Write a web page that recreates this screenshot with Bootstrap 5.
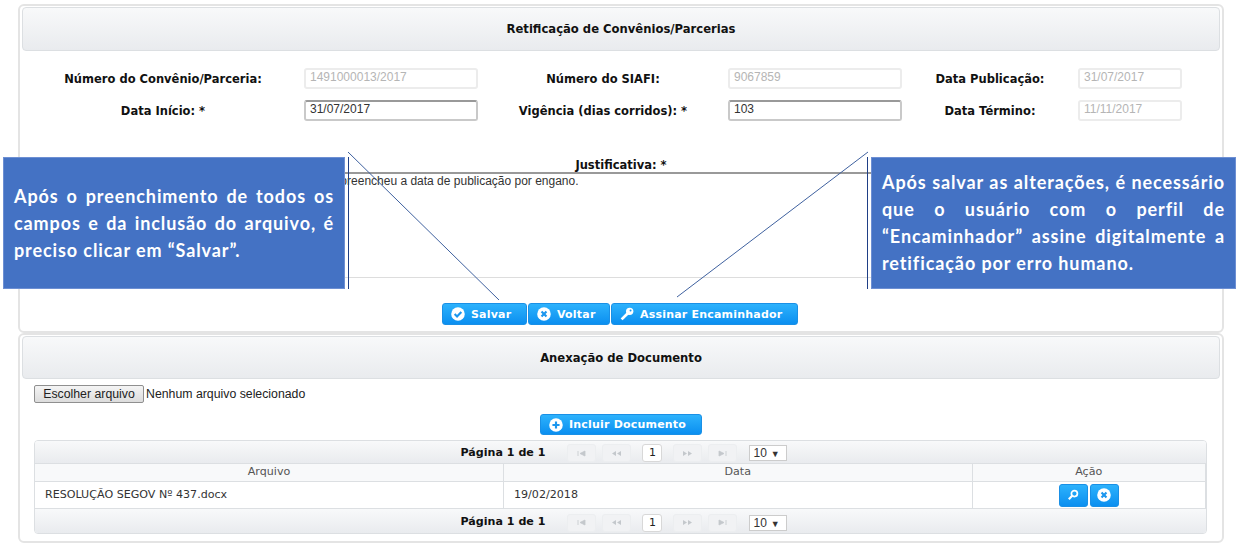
<!DOCTYPE html>
<html lang="pt-BR">
<head>
<meta charset="UTF-8">
<title>Retificação de Convênios/Parcerias</title>
<link href="https://cdn.jsdelivr.net/npm/bootstrap@5.3.0/dist/css/bootstrap.min.css" rel="stylesheet">
<style>
html, body { height: 543px; overflow: hidden; background: #fff; }
body { position: relative; font-family: "DejaVu Sans", sans-serif; font-size: 11px; color: #222; padding: 4px 15px 0 18px; }
.painel { border: 2px solid #e4e4e4; border-radius: 6px; padding: 1px 2px; background: #fff; }
.painel-a { height: 329px; }
.painel-b { height: 210px; }
.painel-topo { height: 44px; padding-top: 2px; border: 1px solid #dcdfe2; border-radius: 4px; background: linear-gradient(#f8f9fa, #e9ebee); font-weight: 700; font-size: 11.6px; color: #111; }
.painel-b .painel-topo { height: 43px; padding-top: 3px; }
.linha-form { height: 21px; margin-bottom: 11px; }
.rot { font-weight: 700; font-size: 11.5px; color: #111; text-align: center; }
.linha-form .rot { padding-top: 2px; }
.rot-1 { width: 282px; }
.rot-2 { width: 250px; }
.rot-3 { width: 176px; }
.campo { height: 21px; font-family: "Liberation Sans", sans-serif; font-size: 12px; padding: 0 4px; line-height: 15px; border-radius: 3px; background: #fff; color: #333; border: 2px solid #c9c9c9; border-top-color: #999; }
.campo.off { color: #b5b5b5; border: 2px solid #ececec; }
.campo-g { width: 174px; }
.campo-p { width: 104px; }
.form-area { padding-top: 17px; }
.just-rot { margin-top: 36px; height: 15px; line-height: 16px; }
.just-area { margin: 0 11px 0 11px; height: 106px; border-top: 2px solid #999; border-bottom: 1px solid #ddd; font-family: "Liberation Sans", sans-serif; font-size: 12px; line-height: 14px; color: #333; padding: 0 0 0 252px; white-space: nowrap; }
.btn-azul { height: 22px; padding: 0 8px; border: 1px solid #1a90e6; border-radius: 3px; background: linear-gradient(#2db2fc, #0b8ff0); color: #fff; font-weight: 700; font-size: 11px; line-height: 1; letter-spacing: .2px; display: inline-flex; align-items: center; gap: 6px; white-space: nowrap; }
.btn-azul svg { flex: none; }
.acoes { margin-top: 25px; padding-right: 2px; gap: 1px; }
.b-salvar { width: 85px; }
.b-voltar { width: 82px; }
.b-assinar { width: 187px; }
.arquivo { height: 18px; margin: 6px 0 0 12px; font-family: "Liberation Sans", sans-serif; font-size: 12.3px; color: #222; gap: 2px; }
.arq-btn { height: 18px; width: 110px; padding: 0; border: 1px solid #8f8f8f; border-radius: 2px; background: linear-gradient(#f4f4f4, #dcdcdc); font-size: 12.3px; font-family: "Liberation Sans", sans-serif; color: #222; line-height: 1; }
.incluir-box { margin-top: 11px; }
.b-incluir { width: 162px; height: 21px; padding: 0 8px; }
.grade { margin: 5px 11px 0 12px; border: 1px solid #dcdfe2; border-radius: 4px; overflow: hidden; width: 1173px; }
.pag { height: 22px; padding-top: 2px; background: linear-gradient(#f8f9fa, #e9ebee); padding-left: 7px; gap: 6px; }
.pag-fim { height: 24px; padding-top: 3px; }
.pag-txt { font-weight: 700; font-size: 11.1px; color: #111; margin-right: 16px; }
.pag-btn { width: 29px; height: 18px; border: 1px solid #eceef0; border-radius: 3px; background: #f1f2f4; display: flex; align-items: center; justify-content: center; }
.pag-num { width: 20px; height: 18px; margin: 0 5px; border: 1px solid #d8d8d8; border-radius: 3px; background: #fff; text-align: center; line-height: 16px; font-size: 11px; color: #222; }
.pag-sel { width: 38px; height: 16px; margin-left: 6px; border: 1px solid #ccc; background: #fff; font-size: 12px; font-family: "Liberation Sans", sans-serif; line-height: 14px; padding-left: 3px; color: #333; }
.pag-sel span { font-size: 9px; margin-left: 4px; }
.tabela { margin: 0; width: 100%; table-layout: fixed; border-collapse: collapse; font-size: 11.1px; color: #333; }
.tabela th, .tabela td { padding: 0; border: 1px solid #dcdfe2; vertical-align: middle; box-shadow: none; }
.tabela tr > *:first-child { border-left: 0; }
.tabela th { height: 18px; background: #f8f9fa; font-weight: 400; text-align: center; color: #555; }
.tabela td { height: 27px; }
.tabela td.txt { padding-left: 10px; }
.col-larga { width: 468.5px; }
.icones { gap: 2px; }
.b-icone { width: 29px; height: 23px; padding: 0; justify-content: center; }
.aviso { position: absolute; top: 157px; height: 132px; background: #4472c4; border: 1px solid #6d8fd3; color: #fff; font-family: Lato, sans-serif; font-weight: 700; font-size: 18px; line-height: 27px; text-align: justify; letter-spacing: .9px; display: flex; align-items: center; }
.aviso-esq { left: 3px; width: 342px; padding: 0 10px; }
.aviso-dir { left: 871px; width: 365px; padding: 0 10px; }
.tracos { position: absolute; left: 0; top: 0; pointer-events: none; }
</style>
</head>
<body>
<section class="painel painel-a">
    <div class="painel-topo d-flex align-items-center justify-content-center">Retificação de Convênios/Parcerias</div>
    <div class="form-area">
        <div class="linha-form d-flex align-items-center">
            <div class="rot rot-1">Número do Convênio/Parceria:</div>
            <div class="campo campo-g off">1491000013/2017</div>
            <div class="rot rot-2">Número do SIAFI:</div>
            <div class="campo campo-g off">9067859</div>
            <div class="rot rot-3">Data Publicação:</div>
            <div class="campo campo-p off">31/07/2017</div>
        </div>
        <div class="linha-form d-flex align-items-center">
            <div class="rot rot-1">Data Início: *</div>
            <div class="campo campo-g">31/07/2017</div>
            <div class="rot rot-2">Vigência (dias corridos): *</div>
            <div class="campo campo-g">103</div>
            <div class="rot rot-3">Data Término:</div>
            <div class="campo campo-p off">11/11/2017</div>
        </div>
        <div class="rot just-rot">Justificativa: *</div>
        <div class="just-area">O usuário preencheu a data de publicação por engano.</div>
    </div>
    <div class="acoes d-flex justify-content-center">
        <button type="button" class="btn-azul b-salvar">
            <svg width="14" height="14" viewBox="0 0 13 13"><circle cx="6.5" cy="6.5" r="6.3" fill="#fff"/><path d="M3.4 6.6l2.2 2.2 4-4.2" fill="none" stroke="#1b96ee" stroke-width="2"/></svg>Salvar</button>
        <button type="button" class="btn-azul b-voltar">
            <svg width="14" height="14" viewBox="0 0 13 13"><circle cx="6.5" cy="6.5" r="6.3" fill="#fff"/><path d="M4.2 4.2l4.6 4.6M8.8 4.2l-4.6 4.6" fill="none" stroke="#1b96ee" stroke-width="2"/></svg>Voltar</button>
        <button type="button" class="btn-azul b-assinar">
            <svg width="14" height="14" viewBox="0 0 13 13"><circle cx="9" cy="4" r="3.4" fill="#fff"/><path d="M7.5 5.5L1.5 11.5" stroke="#fff" stroke-width="2.6" fill="none"/><circle cx="9.8" cy="3.2" r=".9" fill="#1b96ee"/></svg>Assinar Encaminhador</button>
    </div>
</section>
<section class="painel painel-b">
    <div class="painel-topo d-flex align-items-center justify-content-center">Anexação de Documento</div>
    <div class="arquivo d-flex align-items-center">
        <button type="button" class="arq-btn">Escolher arquivo</button>
        <span>Nenhum arquivo selecionado</span>
    </div>
    <div class="incluir-box d-flex justify-content-center">
        <button type="button" class="btn-azul b-incluir">
            <svg width="14" height="14" viewBox="0 0 13 13"><circle cx="6.5" cy="6.5" r="6.3" fill="#fff"/><path d="M6.5 3.2v6.6M3.2 6.5h6.6" fill="none" stroke="#1b96ee" stroke-width="2"/></svg>Incluir Documento</button>
    </div>
    <div class="grade">
        <div class="pag d-flex align-items-center justify-content-center">
            <span class="pag-txt">Página 1 de 1</span>
            <span class="pag-btn"><svg width="9" height="7" viewBox="0 0 9 7"><path d="M1 1v5M8 1v5L3 3.5z" stroke="#c4c8cc" fill="#c4c8cc" stroke-width=".8"/></svg></span>
            <span class="pag-btn"><svg width="11" height="7" viewBox="0 0 11 7"><path d="M5 1v5L1 3.5zM10 1v5L6 3.5z" fill="#c4c8cc"/></svg></span>
            <span class="pag-num">1</span>
            <span class="pag-btn"><svg width="11" height="7" viewBox="0 0 11 7"><path d="M1 1v5l4-2.5zM6 1v5l4-2.5z" fill="#c4c8cc"/></svg></span>
            <span class="pag-btn"><svg width="9" height="7" viewBox="0 0 9 7"><path d="M8 1v5M1 1v5l5-2.5z" stroke="#c4c8cc" fill="#c4c8cc" stroke-width=".8"/></svg></span>
            <div class="pag-sel">10<span>▼</span></div>
        </div>
        <table class="table tabela">
            <colgroup><col class="col-larga"><col class="col-larga"><col></colgroup>
            <thead><tr><th>Arquivo</th><th>Data</th><th>Ação</th></tr></thead>
            <tbody>
                <tr>
                    <td class="txt">RESOLUÇÃO SEGOV Nº 437.docx</td>
                    <td class="txt">19/02/2018</td>
                    <td>
                        <div class="d-flex justify-content-center icones">
                            <button type="button" class="btn-azul b-icone"><svg width="12" height="12" viewBox="0 0 12 12"><circle cx="7.4" cy="4.6" r="3" fill="none" stroke="#fff" stroke-width="1.7"/><path d="M5.2 6.8L1.8 10.2" stroke="#fff" stroke-width="2.2"/></svg></button>
                            <button type="button" class="btn-azul b-icone"><svg width="14" height="14" viewBox="0 0 13 13"><circle cx="6.5" cy="6.5" r="6.3" fill="#fff"/><path d="M4.2 4.2l4.6 4.6M8.8 4.2l-4.6 4.6" fill="none" stroke="#1b96ee" stroke-width="2"/></svg></button>
                        </div>
                    </td>
                </tr>
            </tbody>
        </table>
        <div class="pag pag-fim d-flex align-items-center justify-content-center">
            <span class="pag-txt">Página 1 de 1</span>
            <span class="pag-btn"><svg width="9" height="7" viewBox="0 0 9 7"><path d="M1 1v5M8 1v5L3 3.5z" stroke="#c4c8cc" fill="#c4c8cc" stroke-width=".8"/></svg></span>
            <span class="pag-btn"><svg width="11" height="7" viewBox="0 0 11 7"><path d="M5 1v5L1 3.5zM10 1v5L6 3.5z" fill="#c4c8cc"/></svg></span>
            <span class="pag-num">1</span>
            <span class="pag-btn"><svg width="11" height="7" viewBox="0 0 11 7"><path d="M1 1v5l4-2.5zM6 1v5l4-2.5z" fill="#c4c8cc"/></svg></span>
            <span class="pag-btn"><svg width="9" height="7" viewBox="0 0 9 7"><path d="M8 1v5M1 1v5l5-2.5z" stroke="#c4c8cc" fill="#c4c8cc" stroke-width=".8"/></svg></span>
            <div class="pag-sel">10<span>▼</span></div>
        </div>
    </div>
</section>

<svg class="tracos" width="1239" height="543">
    <path d="M348.5 157V289M867.5 157V289" stroke="#1f3f86" stroke-width="1"/>
    <path d="M348 152L499 300M868 152L677 297" stroke="#3f619f" stroke-width="1" fill="none"/>
</svg>
<div class="aviso aviso-esq"><div>Após o preenchimento de todos os campos e da inclusão do arquivo, é preciso clicar em “Salvar”.</div></div>
<div class="aviso aviso-dir"><div>Após salvar as alterações, é necessário que o usuário com o perfil de “Encaminhador” assine digitalmente a retificação por erro humano.</div></div>
<script src="https://cdn.jsdelivr.net/npm/bootstrap@5.3.0/dist/js/bootstrap.bundle.min.js"></script>
</body>
</html>
